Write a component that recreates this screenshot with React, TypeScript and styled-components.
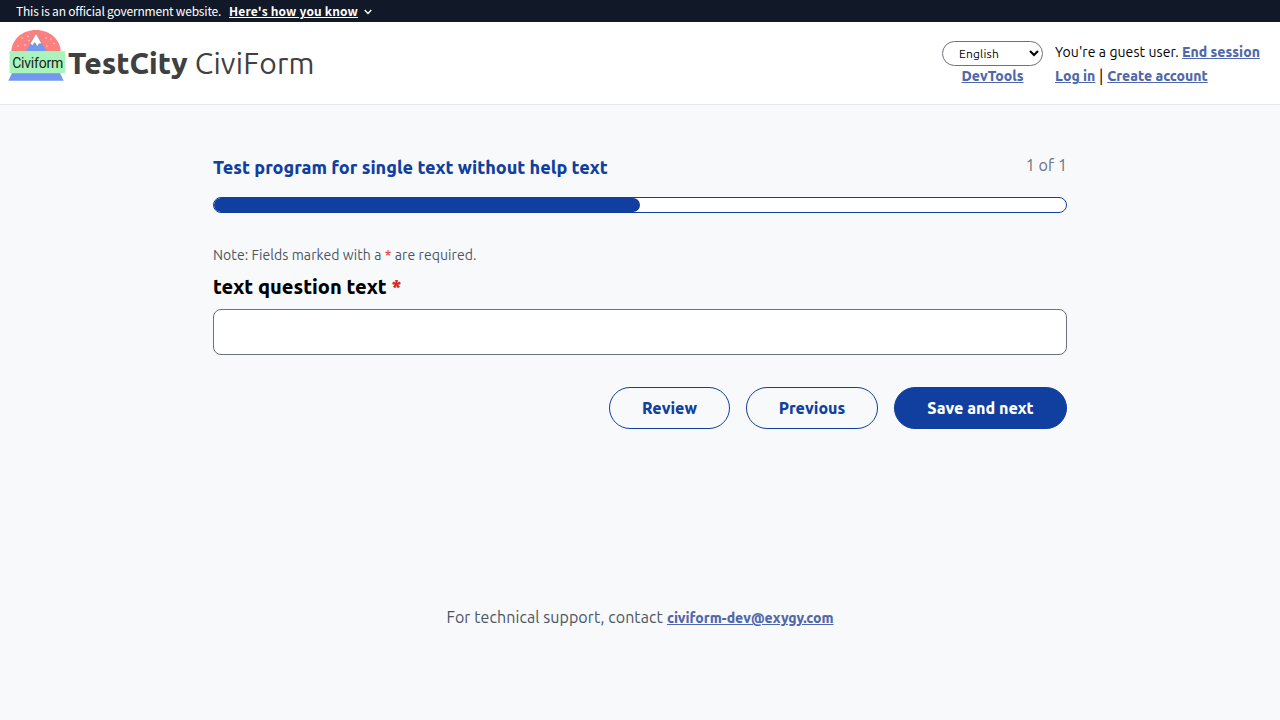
import React from "react";
import styled, { createGlobalStyle } from "styled-components";

const GlobalStyle = createGlobalStyle`
  * { box-sizing: border-box; }
  html, body { margin: 0; padding: 0; }
  body {
    min-height: 100vh;
    background: #f8f9fb;
    color: #000;
    font-family: Ubuntu, "Noto Sans", "Open Sans", sans-serif;
    font-size: 16px;
    line-height: 24px;
  }
`;

const Txt = styled.span<{ $size?: number; $track?: number; $bold?: boolean; $color?: string }>`
  font-size: ${(p) => p.$size ?? 16}px;
  letter-spacing: ${(p) => p.$track ?? (p.$bold ? 0 : 0.08)}px;
  font-weight: ${(p) => (p.$bold ? 800 : 400)};
  color: ${(p) => p.$color ?? "inherit"};
  white-space: pre;
`;

const Banner = styled.div`
  height: 22px;
  padding: 0 16px;
  display: flex;
  align-items: center;
  background: #111827;
  color: #fff;
  font-family: "Noto Sans CJK SC", "Noto Sans", sans-serif;
  line-height: 22px;
`;

const BannerToggle = styled.button`
  display: flex;
  align-items: center;
  margin-left: 8px;
  padding: 0;
  border: 0;
  background: none;
  color: #fff;
  font-family: inherit;
  line-height: 22px;
  svg { margin: 2px 0 0 6px; }
`;

const Underlined = styled(Txt)`
  font-weight: 700;
  text-decoration: underline;
`;

const Header = styled.header`
  height: 83px;
  display: flex;
  justify-content: space-between;
  background: #fff;
  border-bottom: 1px solid #e5e7eb;
`;

const Brand = styled.div`
  display: flex;
  align-items: flex-start;
  padding: 8px 0 0 8px;
`;

const BrandName = styled.div`
  display: flex;
  margin-left: 2px;
  padding-top: 15px;
  line-height: 36px;
  color: #404040;
`;

const Account = styled.div`
  display: flex;
  gap: 12px;
  padding: 18px 20px 0 0;
`;

const LanguageColumn = styled.div`
  width: 101px;
  display: flex;
  flex-direction: column;
  align-items: center;
  padding-top: 1px;
`;

const Language = styled.select`
  width: 101px;
  height: 25px;
  margin-bottom: -2px;
  padding: 0 0 0 12px;
  border: 1px solid #6b7280;
  border-radius: 13px;
  background: #fff;
  color: #000;
  font-family: inherit;
  font-size: 12px;
  letter-spacing: 0.2px;
`;

const Session = styled.div`
  width: 205px;
`;

const SessionLine = styled.div`
  height: 24px;
  display: flex;
  align-items: center;
`;

const Link = styled.a`
  color: #5068aa;
  font-size: 14px;
  font-weight: 800;
  line-height: 24px;
  text-decoration: underline;
  white-space: pre;
`;

const Main = styled.main`
  width: 854px;
  margin: 0 auto;
  padding-top: 48px;
`;

const ProgramRow = styled.div`
  display: flex;
  justify-content: space-between;
  height: 28px;
`;

const ProgramTitle = styled.h1`
  margin: 0;
  padding-top: 2px;
  font-size: 18px;
  line-height: 24px;
  color: #113f9f;
`;

const Track = styled.div`
  height: 16px;
  margin-top: 16px;
  border: 1px solid #113f9f;
  border-radius: 8px;
  background: #fff;
  overflow: hidden;
`;

const Fill = styled.div`
  width: 50%;
  height: 100%;
  border-radius: 0 7px 7px 0;
  background: #113f9f;
`;

const Note = styled.p`
  margin: 30px 0 0;
  font-size: 14px;
  line-height: 24px;
  color: #4b5563;
`;

const Question = styled.label`
  display: block;
  margin-top: 6px;
  font-size: 20px;
  line-height: 28px;
`;

const Input = styled.input`
  display: block;
  width: 100%;
  height: 46px;
  margin-top: 8px;
  padding: 0 12px;
  border: 1px solid #6b7280;
  border-radius: 8px;
  background: #fff;
  font: inherit;
`;

const Actions = styled.div`
  display: flex;
  justify-content: flex-end;
  gap: 16px;
  margin-top: 32px;
`;

const Button = styled.button<{ $width: number; $solid?: boolean }>`
  width: ${(p) => p.$width}px;
  height: 42px;
  padding: 0;
  border: 1px solid #113f9f;
  border-radius: 21px;
  background: ${(p) => (p.$solid ? "#113f9f" : "transparent")};
  color: ${(p) => (p.$solid ? "#fff" : "#113f9f")};
  font-family: inherit;
`;

const Footer = styled.footer`
  display: flex;
  justify-content: center;
  align-items: baseline;
  gap: 4px;
  margin-top: 176px;
  color: #4b5563;
`;

const Logo = () => (
  <svg width="58" height="52" viewBox="8 30 58 52">
    <path d="M11.3 51.5C11.8 39.5 22 30 36 30S60.200 39.500 60.700 51.500z" fill="#fb8080" />
    <path d="M26 51L36 34L46.500 51z" fill="#7398f0" />
    <path d="M36 33.500L30.300 43.500L32.300 45.500L34.800 42.600L37.400 46.500L39 43.800L41.700 43.500z" fill="#fff" stroke="#777" strokeWidth=".4" />
    <g fill="#fff" opacity=".75">
      <circle cx="22" cy="38" r=".7" />
      <circle cx="28" cy="36.500" r=".7" />
      <circle cx="18" cy="46" r=".7" />
      <circle cx="25" cy="45" r=".7" />
      <circle cx="29" cy="40.500" r=".7" />
      <circle cx="46" cy="38" r=".7" />
      <circle cx="51" cy="39" r=".7" />
      <circle cx="47" cy="46" r=".7" />
      <circle cx="54" cy="43.500" r=".7" />
    </g>
    <path d="M12 73H60L63.700 80.800H8.300z" fill="#7398f0" />
    <rect x="9.500" y="51.200" width="55.500" height="22" fill="#a9f4bb" />
    <text x="12.200" y="67.800" fontFamily="Roboto, sans-serif" fontSize="14" textLength="51" fill="#16241a">Civiform</text>
  </svg>
);

export default function App() {
  return (
    <>
      <GlobalStyle />
      <Banner>
        <Txt $size={12} $track={-0.2}>This is an official government website.</Txt>
        <BannerToggle>
          <Underlined $size={12} $track={0.16}>Here's how you know</Underlined>
          <svg width="8" height="6" viewBox="0 0 8 6" fill="none" stroke="#fff" strokeWidth="1.300">
            <path d="M.7 1L4 4.500L7.300 1" />
          </svg>
        </BannerToggle>
      </Banner>
      <Header>
        <Brand>
          <Logo />
          <BrandName>
            <Txt $size={30} $bold>TestCity</Txt>
            <Txt $size={30} $track={0.22}> CiviForm</Txt>
          </BrandName>
        </Brand>
        <Account>
          <LanguageColumn>
            <Language defaultValue="en" aria-label="Language">
              <option value="en">English</option>
            </Language>
            <Link>DevTools</Link>
          </LanguageColumn>
          <Session>
            <SessionLine>
              <Txt $size={14}>You're a guest user. </Txt>
              <Link>End session</Link>
            </SessionLine>
            <SessionLine>
              <Link>Log in</Link>
              <Txt> | </Txt>
              <Link>Create account</Link>
            </SessionLine>
          </Session>
        </Account>
      </Header>
      <Main>
        <ProgramRow>
          <ProgramTitle>
            <Txt $size={18} $bold>Test program for single text without help text</Txt>
          </ProgramTitle>
          <Txt $color="#6b7280">1 of 1</Txt>
        </ProgramRow>
        <Track>
          <Fill />
        </Track>
        <Note>
          <Txt $size={14}>Note: Fields marked with a </Txt>
          <Txt $size={14} $color="#dc2626">*</Txt>
          <Txt $size={14}> are required.</Txt>
        </Note>
        <Question htmlFor="answer">
          <Txt $size={20} $bold>text question text </Txt>
          <Txt $size={20} $bold $color="#dc2626">*</Txt>
        </Question>
        <Input id="answer" />
        <Actions>
          <Button $width={121}><Txt $bold>Review</Txt></Button>
          <Button $width={132}><Txt $bold>Previous</Txt></Button>
          <Button $width={173} $solid><Txt $bold>Save and next</Txt></Button>
        </Actions>
      </Main>
      <Footer>
        <Txt>For technical support, contact</Txt>
        <Link>civiform-dev@exygy.com</Link>
      </Footer>
    </>
  );
}
